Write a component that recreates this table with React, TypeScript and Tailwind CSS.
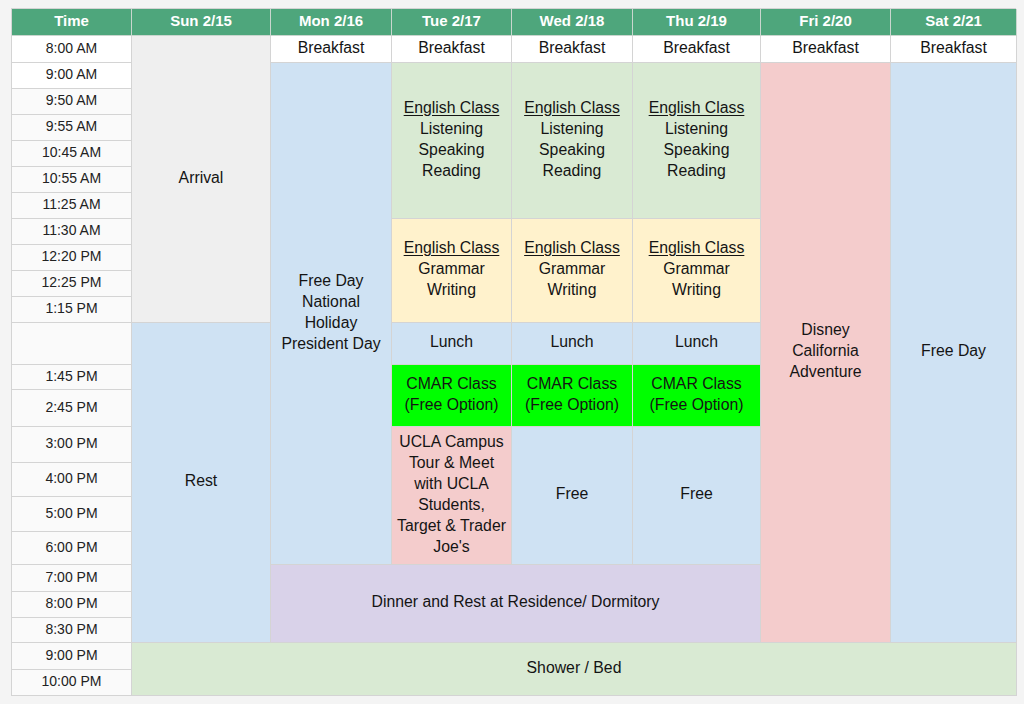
const days = ["Sun 2/15", "Mon 2/16", "Tue 2/17", "Wed 2/18", "Thu 2/19", "Fri 2/20", "Sat 2/21"];

const headerCols = [
  "col-start-2",
  "col-start-3",
  "col-start-4",
  "col-start-5",
  "col-start-6",
  "col-start-7",
  "col-start-8",
];

const times: [string, string][] = [
  ["8:00 AM", "row-start-2"],
  ["9:00 AM", "row-start-3"],
  ["9:50 AM", "row-start-4"],
  ["9:55 AM", "row-start-5"],
  ["10:45 AM", "row-start-6"],
  ["10:55 AM", "row-start-7"],
  ["11:25 AM", "row-start-8"],
  ["11:30 AM", "row-start-9"],
  ["12:20 PM", "row-start-10"],
  ["12:25 PM", "row-start-11"],
  ["1:15 PM", "row-start-12"],
  ["", "row-start-13"],
  ["1:45 PM", "row-start-14"],
  ["2:45 PM", "row-start-15"],
  ["3:00 PM", "row-start-16"],
  ["4:00 PM", "row-start-17"],
  ["5:00 PM", "row-start-18"],
  ["6:00 PM", "row-start-19"],
  ["7:00 PM", "row-start-20"],
  ["8:00 PM", "row-start-21"],
  ["8:30 PM", "row-start-22"],
  ["9:00 PM", "row-start-23"],
  ["10:00 PM", "row-start-24"],
];

type Block = {
  place: string;
  bg: string;
  lines: string[];
  heading?: string;
};

const weekdayCols = ["col-start-4", "col-start-5", "col-start-6"];

const blocks: Block[] = [
  // Sunday
  { place: "col-start-2 row-start-2 row-span-11", bg: "bg-[#efefef]", lines: ["Arrival"] },
  { place: "col-start-2 row-start-13 row-span-10", bg: "bg-[#cfe2f3]", lines: ["Rest"] },
  // Monday
  { place: "col-start-3 row-start-2", bg: "bg-white", lines: ["Breakfast"] },
  {
    place: "col-start-3 row-start-3 row-span-17",
    bg: "bg-[#cfe2f3]",
    lines: ["Free Day", "National", "Holiday", "President Day"],
  },
  // Tue - Thu
  ...weekdayCols.flatMap((col, i): Block[] => [
    { place: `${col} row-start-2`, bg: "bg-white", lines: ["Breakfast"] },
    {
      place: `${col} row-start-3 row-span-6`,
      bg: "bg-[#d9ead3]",
      heading: "English Class",
      lines: ["Listening", "Speaking", "Reading"],
    },
    {
      place: `${col} row-start-9 row-span-4`,
      bg: "bg-[#fff2cc]",
      heading: "English Class",
      lines: ["Grammar", "Writing"],
    },
    { place: `${col} row-start-13`, bg: "bg-[#cfe2f3]", lines: ["Lunch"] },
    {
      place: `${col} row-start-14 row-span-2`,
      bg: "bg-[#00ff00]",
      lines: ["CMAR Class", "(Free Option)"],
    },
    i === 0
      ? {
          place: `${col} row-start-16 row-span-4`,
          bg: "bg-[#f4cccc]",
          lines: ["UCLA Campus", "Tour & Meet", "with UCLA", "Students,", "Target & Trader", "Joe's"],
        }
      : { place: `${col} row-start-16 row-span-4`, bg: "bg-[#cfe2f3]", lines: ["Free"] },
  ]),
  {
    place: "col-start-3 col-span-4 row-start-20 row-span-3",
    bg: "bg-[#d9d2e9]",
    lines: ["Dinner and Rest at Residence/ Dormitory"],
  },
  // Friday
  { place: "col-start-7 row-start-2", bg: "bg-white", lines: ["Breakfast"] },
  {
    place: "col-start-7 row-start-3 row-span-20",
    bg: "bg-[#f4cccc]",
    lines: ["Disney", "California", "Adventure"],
  },
  // Saturday
  { place: "col-start-8 row-start-2", bg: "bg-white", lines: ["Breakfast"] },
  { place: "col-start-8 row-start-3 row-span-20", bg: "bg-[#cfe2f3]", lines: ["Free Day"] },
  // Everyone
  { place: "col-start-2 col-span-7 row-start-23 row-span-2", bg: "bg-[#d9ead3]", lines: ["Shower / Bed"] },
];

export default function App() {
  return (
    <div className="min-h-[704px] w-[1024px] bg-[#f4f4f4] pl-[11px] pt-[8px] font-['Liberation_Sans',Arial,sans-serif]">
      <div className="grid w-[1005px] grid-cols-[120px_139px_121px_120px_121px_128px_130px_126px] grid-rows-[27px_27px_26px_26px_26px_26px_26px_26px_26px_26px_26px_26px_42px_25px_37px_36px_34px_35px_33px_27px_26px_25px_27px_26px] border-l border-t border-[#d4d4d4]">
        <div className="col-start-1 row-start-1 flex items-center justify-center border-b border-r border-[#c9d6ce] bg-[#4ea67c] pb-[1px] text-[15px] font-bold text-white">
          Time
        </div>
        {days.map((day, i) => (
          <div
            key={day}
            className={`${headerCols[i]} row-start-1 flex items-center justify-center border-b border-r border-[#c9d6ce] bg-[#4ea67c] pb-[1px] text-[15px] font-bold text-white`}
          >
            {day}
          </div>
        ))}

        {times.map(([label, row], i) => (
          <div
            key={row}
            className={`col-start-1 ${row} flex items-center justify-center border-b border-r border-[#d4d4d4] pb-[2px] ${
              i < 2 ? "bg-white" : "bg-[#fafafa]"
            } text-[14px] text-[#222]`}
          >
            {label}
          </div>
        ))}

        {blocks.map((b) => (
          <div
            key={b.place}
            className={`${b.place} ${b.bg} flex flex-col items-center justify-center border-b border-r border-[#d4d4d4] px-1 pb-1 text-center text-[15.8px] leading-[21px] text-[#141414]`}
          >
            {b.heading ? <span className="underline underline-offset-2">{b.heading}</span> : null}
            {b.lines.map((line) => (
              <span key={line} className="whitespace-nowrap">
                {line}
              </span>
            ))}
          </div>
        ))}
      </div>
    </div>
  );
}
